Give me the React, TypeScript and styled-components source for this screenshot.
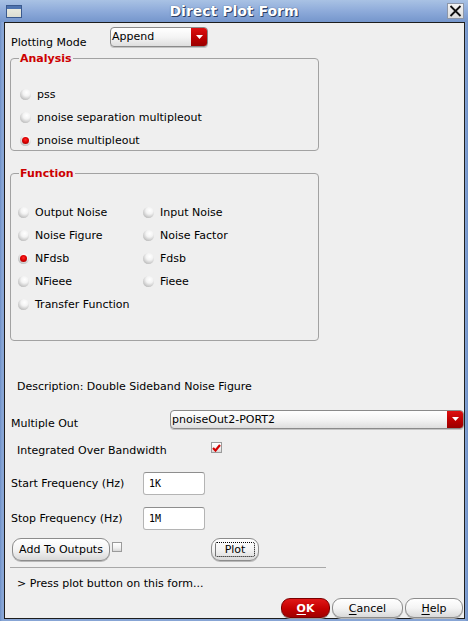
import React from 'react';
import styled, { createGlobalStyle } from 'styled-components';

const Global = createGlobalStyle`
  html, body { margin: 0; padding: 0; background: #ffffff; }
  body { font-family: "DejaVu Sans", "Liberation Sans", sans-serif; font-size: 11px; color: #000; }
  * { box-sizing: border-box; }
`;

const Window = styled.div`
  width: 468px;
  height: 621px;
  display: flex;
  flex-direction: column;
  background: linear-gradient(to right, #6d8fc6 0, #87a5d5 2px, #87a5d5 465px, #6d8fc6 468px);
`;

const TitleBar = styled.div`
  height: 22px;
  flex: none;
  display: grid;
  grid-template-columns: 1fr auto 1fr;
  align-items: center;
  background: linear-gradient(#a9c2e4, #8eabda 50%, #7596cc);
`;

const TitleText = styled.div`
  font-size: 14px;
  font-weight: bold;
  color: #ffffff;
  text-shadow: 1px 1px 0 #2d4166, 0 0 1px #2d4166;
  white-space: nowrap;
  line-height: 17px;
`;

const WinIcon = styled.div`
  width: 16px;
  height: 13px;
  margin-left: 6px;
  border: 1px solid #3b5a8e;
  background: linear-gradient(#4f74b0 0, #4f74b0 3px, #e9eadf 3px, #dcddd2 100%);
`;

const CloseBox = styled.div`
  justify-self: end;
  margin-right: 4px;
  width: 17px;
  height: 16px;
  border: 1px solid #8c96a8;
  background: linear-gradient(#f3f3f3, #dcdcdc);
  display: flex;
  align-items: center;
  justify-content: center;
`;

const Content = styled.div`
  flex: 1;
  margin: 0 3px 2px 4px;
  border: 1px solid #1d1d1d;
  background: #efefef;
  display: flex;
  flex-direction: column;
`;

const Row = styled.div<{ $mt: number; $h: number; $pl: number; $align?: string }>`
  display: flex;
  flex: none;
  margin-top: ${p => p.$mt}px;
  height: ${p => p.$h}px;
  padding-left: ${p => p.$pl}px;
  align-items: ${p => p.$align || 'center'};
`;

const Label = styled.span<{ $w?: number; $self?: string }>`
  display: block;
  flex: none;
  width: ${p => (p.$w ? `${p.$w}px` : 'auto')};
  line-height: 13px;
  white-space: nowrap;
  align-self: ${p => p.$self || 'auto'};
`;

const Combo = styled.div<{ $w?: number; $h: number }>`
  display: flex;
  flex: ${p => (p.$w ? 'none' : '1')};
  width: ${p => (p.$w ? `${p.$w}px` : 'auto')};
  height: ${p => p.$h}px;
  border: 1px solid #8a8a8a;
  border-radius: 4px;
  overflow: hidden;
  background: linear-gradient(#ffffff, #f4f4f4 50%, #dedede);
  box-shadow: 0 1px 0 #c4c4c4;
  align-self: flex-start;
`;

const ComboText = styled.span`
  flex: 1;
  padding-left: 1px;
  line-height: 17px;
  white-space: nowrap;
`;

const ComboArrow = styled.span`
  width: 16px;
  flex: none;
  background: linear-gradient(#dd1010, #b80000 60%, #9a0000);
  display: flex;
  align-items: center;
  justify-content: center;
  padding-bottom: 1px;
`;

const GroupBox = styled.div<{ $mt: number; $h: number; $pt: number; $pl: number }>`
  position: relative;
  flex: none;
  margin-top: ${p => p.$mt}px;
  margin-left: 5px;
  width: 309px;
  height: ${p => p.$h}px;
  border: 1px solid #a2a2a2;
  border-radius: 4px;
  padding-top: ${p => p.$pt}px;
  padding-left: ${p => p.$pl}px;
`;

const GroupTitle = styled.span`
  position: absolute;
  top: -7px;
  left: 8px;
  padding: 0 1px;
  background: #efefef;
  color: #cc0000;
  font-weight: bold;
  line-height: 13px;
`;

const RadioGrid = styled.div<{ $cols: string }>`
  display: grid;
  grid-template-columns: ${p => p.$cols};
  row-gap: 7px;
`;

const RadioItem = styled.div<{ $gap: number }>`
  display: flex;
  align-items: center;
  gap: ${p => p.$gap}px;
  height: 16px;
  white-space: nowrap;
`;

const RadioDot = styled.span<{ $on?: boolean }>`
  position: relative;
  flex: none;
  width: 11px;
  height: 11px;
  border-radius: 50%;
  background: radial-gradient(circle at 60% 32%, #ffffff 0, #f3f3f3 35%, #c4c4c4 72%, #868686 100%);
  &::after {
    content: '';
    display: ${p => (p.$on ? 'block' : 'none')};
    position: absolute;
    left: 2px;
    top: 2px;
    width: 7px;
    height: 7px;
    border-radius: 50%;
    background: radial-gradient(circle at 50% 40%, #ff2a2a 0, #dd0000 45%, #8a0000 100%);
  }
`;

const CheckBox = styled.span<{ $size: number }>`
  display: flex;
  flex: none;
  align-items: center;
  justify-content: center;
  width: ${p => p.$size}px;
  height: ${p => p.$size}px;
  border: 1px solid #9b9b9b;
  background: linear-gradient(#ffffff, #f1f1f1 60%, #d8d8d8);
  align-self: flex-start;
`;

const Field = styled.input`
  flex: none;
  width: 62px;
  height: 23px;
  margin: 0;
  padding: 0 0 0 5px;
  border: 1px solid #b4b4b4;
  border-top-color: #8e8e8e;
  border-radius: 3px;
  background: #ffffff;
  font-family: "DejaVu Sans Mono", monospace;
  font-size: 10px;
  color: #000;
  outline: none;
`;

const PushButton = styled.button<{ $w: number; $ml?: number; $primary?: boolean; $focus?: boolean }>`
  position: relative;
  flex: none;
  width: ${p => p.$w}px;
  height: 100%;
  margin: 0 0 0 ${p => p.$ml || 0}px;
  padding: 0;
  border: 1px solid ${p => (p.$primary ? '#7a0000' : '#8c8c8c')};
  border-radius: 9px;
  background: ${p =>
    p.$primary
      ? 'linear-gradient(#e01818, #c40000 55%, #a00000)'
      : 'linear-gradient(#ffffff, #f4f4f4 50%, #d9d9d9)'};
  box-shadow: 0 1px 0 ${p => (p.$primary ? '#9a9a9a' : '#b8b8b8')};
  color: ${p => (p.$primary ? '#ffffff' : '#000000')};
  font-family: "DejaVu Sans", sans-serif;
  font-size: 11px;
  font-weight: ${p => (p.$primary ? 'bold' : 'normal')};
  line-height: 13px;
  white-space: nowrap;
  &::after {
    content: '';
    display: ${p => (p.$focus ? 'block' : 'none')};
    position: absolute;
    left: 3px;
    right: 3px;
    top: 3px;
    bottom: 3px;
    border: 1px dotted #000;
    border-radius: 2px;
  }
`;

const Key = styled.span`
  text-decoration: underline;
  text-underline-offset: 2px;
`;

const Separator = styled.div`
  flex: none;
  margin-top: 6px;
  margin-left: 5px;
  width: 316px;
  height: 1px;
  background: #a8a8a8;
`;

const ButtonBar = styled.div`
  display: flex;
  flex: none;
  justify-content: flex-end;
  gap: 2px;
  margin-top: 8px;
  height: 20px;
  padding-right: 1px;
`;

const Arrow = () => (
  <svg width="7" height="4" viewBox="0 0 7 4">
    <path d="M0 0H7L3.5 4Z" fill="#ffffff" />
  </svg>
);

const analysis = [
  { label: 'pss', on: false },
  { label: 'pnoise separation multipleout', on: false },
  { label: 'pnoise multipleout', on: true },
];

const functions = [
  { label: 'Output Noise', on: false },
  { label: 'Input Noise', on: false },
  { label: 'Noise Figure', on: false },
  { label: 'Noise Factor', on: false },
  { label: 'NFdsb', on: true },
  { label: 'Fdsb', on: false },
  { label: 'NFieee', on: false },
  { label: 'Fieee', on: false },
  { label: 'Transfer Function', on: false },
];

export default function App() {
  return (
    <>
      <Global />
      <Window>
        <TitleBar>
          <WinIcon />
          <TitleText>Direct Plot Form</TitleText>
          <CloseBox>
            <svg width="13" height="12" viewBox="0 0 13 12">
              <path d="M1.5 1L11.5 11M11.5 1L1.5 11" stroke="#111" strokeWidth="1.8" />
            </svg>
          </CloseBox>
        </TitleBar>
        <Content>
          <Row $mt={4} $h={22} $pl={6} $align="flex-start">
            <Label $w={99} $self="flex-end">Plotting Mode</Label>
            <Combo $w={98} $h={20}>
              <ComboText>Append</ComboText>
              <ComboArrow><Arrow /></ComboArrow>
            </Combo>
          </Row>

          <GroupBox $mt={9} $h={93} $pt={27} $pl={9}>
            <GroupTitle>Analysis</GroupTitle>
            <RadioGrid $cols="1fr">
              {analysis.map(a => (
                <RadioItem key={a.label} $gap={6}>
                  <RadioDot $on={a.on} />
                  {a.label}
                </RadioItem>
              ))}
            </RadioGrid>
          </GroupBox>

          <GroupBox $mt={22} $h={168} $pt={30} $pl={7}>
            <GroupTitle>Function</GroupTitle>
            <RadioGrid $cols="125px 1fr">
              {functions.map(f => (
                <RadioItem key={f.label} $gap={6}>
                  <RadioDot $on={f.on} />
                  {f.label}
                </RadioItem>
              ))}
            </RadioGrid>
          </GroupBox>

          <Row $mt={39} $h={13} $pl={12}>
            <Label>Description: Double Sideband Noise Figure</Label>
          </Row>

          <Row $mt={17} $h={20} $pl={6} $align="flex-start">
            <Label $w={159} $self="flex-end">Multiple Out</Label>
            <Combo $h={19}>
              <ComboText>pnoiseOut2-PORT2</ComboText>
              <ComboArrow><Arrow /></ComboArrow>
            </Combo>
          </Row>

          <Row $mt={12} $h={15} $pl={12} $align="flex-start">
            <Label $w={194} $self="flex-end">Integrated Over Bandwidth</Label>
            <CheckBox $size={11}>
              <svg width="9" height="8" viewBox="0 0 9 8">
                <path d="M1 4L3.5 6.5L8 1" stroke="#d40000" strokeWidth="2.2" fill="none" />
              </svg>
            </CheckBox>
          </Row>

          <Row $mt={15} $h={23} $pl={6}>
            <Label $w={132}>Start Frequency (Hz)</Label>
            <Field readOnly value="1K" />
          </Row>

          <Row $mt={12} $h={23} $pl={6}>
            <Label $w={132}>Stop Frequency (Hz)</Label>
            <Field readOnly value="1M" />
          </Row>

          <Row $mt={8} $h={23} $pl={7} $align="stretch">
            <PushButton $w={98}>Add To Outputs</PushButton>
            <CheckBox $size={10} style={{ marginLeft: 2, marginTop: 4 }} />
            <PushButton $w={48} $ml={89} $focus>Plot</PushButton>
          </Row>

          <Separator />

          <Row $mt={9} $h={13} $pl={12}>
            <Label>&gt; Press plot button on this form...</Label>
          </Row>

          <ButtonBar>
            <PushButton $w={49} $primary><Key>O</Key>K</PushButton>
            <PushButton $w={71}><Key>C</Key>ancel</PushButton>
            <PushButton $w={58}><Key>H</Key>elp</PushButton>
          </ButtonBar>
        </Content>
      </Window>
    </>
  );
}
